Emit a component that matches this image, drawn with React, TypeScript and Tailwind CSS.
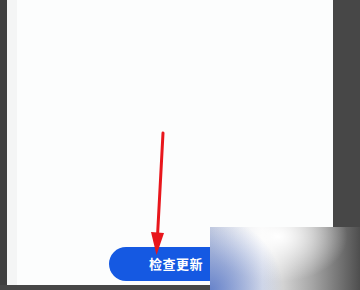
export default function App() {
  return (
    <div className="relative w-[360px] h-[290px] overflow-hidden bg-[#474747] font-['Noto_Sans_CJK_SC',sans-serif]">
      <div className="flex h-[285px]">
        <div className="w-[7px] bg-[#3f3f3f]" />
        <div className="w-[10px] bg-[#f4f5f5]" />
        <div className="flex w-[316px] flex-col justify-end bg-[#fcfdfd] pb-[4px]">
          <button className="ml-[92px] flex h-[34px] w-[132px] items-center justify-center rounded-full bg-[#1559e2] pl-[2px] text-[13px] font-bold tracking-[0.5px] text-white">
            检查更新
          </button>
        </div>
      </div>

      {/* red arrow annotation */}
      <svg className="absolute left-0 top-0" width="360" height="290" viewBox="0 0 360 290">
        <line x1="163" y1="133" x2="157.5" y2="236" stroke="#e8161c" strokeWidth="3" strokeLinecap="round" />
        <path d="M151 232 L164 233 L156.5 255 Z" fill="#e8161c" />
      </svg>

      {/* watermark corner */}
      <div className="absolute left-[210px] top-[227px] h-[63px] w-[150px] bg-[radial-gradient(circle_at_0%_100%,rgba(70,105,195,0.75),rgba(70,105,195,0)_45%),radial-gradient(ellipse_at_45%_15%,#ffffff,rgba(255,255,255,0)_60%),linear-gradient(to_right,#cdd3e2,#f2f2f2_35%,#a6a6a6_68%,#4e4e4e)]" />
    </div>
  );
}
